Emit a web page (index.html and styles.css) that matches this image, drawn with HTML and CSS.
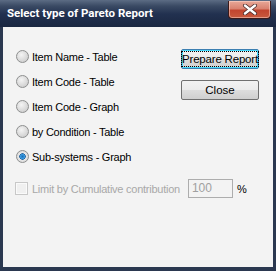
FILE: index.html
```html
<!DOCTYPE html>
<html>
<head>
<meta charset="utf-8">
<link rel="stylesheet" href="styles.css">
</head>
<body>
<div class="window">
  <div class="titlebar">
    <span class="title">Select type of Pareto Report</span>
    <div class="close-btn">
      <svg width="16" height="11" viewBox="0 0 16 11"><path d="M3 1.5 L13 9.5 M13 1.5 L3 9.5" stroke="#4a2a2a" stroke-width="4" stroke-linecap="round"/><path d="M3 1.5 L13 9.5 M13 1.5 L3 9.5" stroke="#ffffff" stroke-width="2.4" stroke-linecap="round"/></svg>
    </div>
  </div>
  <div class="client">
    <div class="top">
      <div class="options">
        <div class="opt"><span class="radio"></span><span>Item Name - Table</span></div>
        <div class="opt"><span class="radio"></span><span>Item Code - Table</span></div>
        <div class="opt"><span class="radio"></span><span>Item Code - Graph</span></div>
        <div class="opt"><span class="radio"></span><span>by Condition - Table</span></div>
        <div class="opt"><span class="radio checked"></span><span>Sub-systems - Graph</span></div>
      </div>
      <div class="buttons">
        <div class="btn default"><span class="focus">Prepare Report</span></div>
        <div class="btn">Close</div>
      </div>
    </div>
    <div class="limit">
      <span class="check"></span>
      <span class="limit-label">Limit by Cumulative contribution</span>
      <span class="field">100</span>
      <span class="pct">%</span>
    </div>
  </div>
</div>
</body>
</html>
```
FILE: styles.css
```css
html, body { margin: 0; padding: 0; }
body { width: 276px; height: 271px; overflow: hidden; font-family: "Liberation Sans", Arial, sans-serif; font-size: 11px; color: #000; }
.window {
  width: 276px; height: 271px; box-sizing: border-box;
  display: flex; flex-direction: column;
  background: #2b3850;
  padding: 0 3px 4px 3px;
}
.titlebar {
  height: 27px; flex: none; position: relative;
  margin: 0 -3px;
  background: linear-gradient(to bottom, #5c6c84 0px, #3a4a64 6px, #223150 14px, #1a2741 27px);
  display: flex; align-items: center;
}
.title {
  color: #fff; font-family: Roboto, "Liberation Sans", sans-serif;
  font-weight: bold; font-size: 11.5px;
  margin-left: 7px; margin-top: -1px; white-space: nowrap;
}
.close-btn {
  position: absolute; right: 5px; top: 1px;
  width: 41px; height: 17px;
  border: 1px solid #3a1a1a; border-top: none; border-radius: 0 0 4px 4px;
  background: linear-gradient(to bottom, #e8a898 0%, #d98270 45%, #c2452f 55%, #c85a3e 100%);
  box-shadow: inset 0 0 0 1px rgba(255,220,210,0.5);
  display: flex; align-items: center; justify-content: center;
}
.client {
  flex: 1; background: #f3f3f3;
  padding: 17px 0 0 12px;
  display: flex; flex-direction: column;
}
.top { display: flex; }
.options { display: flex; flex-direction: column; width: 166px; letter-spacing: -0.25px; }
.opt { height: 25px; display: flex; align-items: center; gap: 3px; white-space: nowrap; }
.radio {
  width: 11px; height: 11px; border-radius: 50%;
  border: 1px solid #8e8f8f;
  background: radial-gradient(circle at 40% 35%, #f4f4f4 0%, #d8d8d8 60%, #c4c4c4 100%);
  margin-left: 1px; flex: none;
}
.radio.checked {
  background: radial-gradient(circle, #1a6fb8 0%, #3a9ae0 28%, #1f5e9a 38%, #e8e8e8 45%, #d0d0d0 100%);
}
.buttons { display: flex; flex-direction: column; gap: 11px; margin-top: 5px; }
.btn {
  width: 78px; height: 20px; box-sizing: border-box;
  border: 1px solid #707070; border-radius: 2px;
  background: linear-gradient(to bottom, #f2f2f2 0%, #ebebeb 50%, #dddddd 51%, #cfcfcf 100%);
  display: flex; align-items: center; justify-content: center;
  font-size: 11.5px; white-space: nowrap;
}
.btn.default { border-color: #3c7fb1; box-shadow: inset 0 0 0 1px #48d8fb; }
.focus { outline: 1px dotted #000; padding: 0; line-height: 14px; letter-spacing: -0.2px; }
.limit { display: flex; align-items: center; margin-top: 7px; height: 25px; white-space: nowrap; }
.check {
  width: 11px; height: 11px; border: 1px solid #c8c8c8; background: #f0f0f0;
  box-shadow: inset 0 0 0 1px #fafafa; flex: none;
}
.limit-label { color: #a8a8a8; margin-left: 4px; font-size: 11px; letter-spacing: -0.25px; }
.field {
  margin-left: 8px; width: 45px; height: 19px; box-sizing: border-box; flex: none;
  border: 1px solid #adadad; color: #a0a0a0; font-size: 12px;
  padding-left: 3px; line-height: 17px;
}
.pct { margin-left: 4px; font-size: 11px; }
```
